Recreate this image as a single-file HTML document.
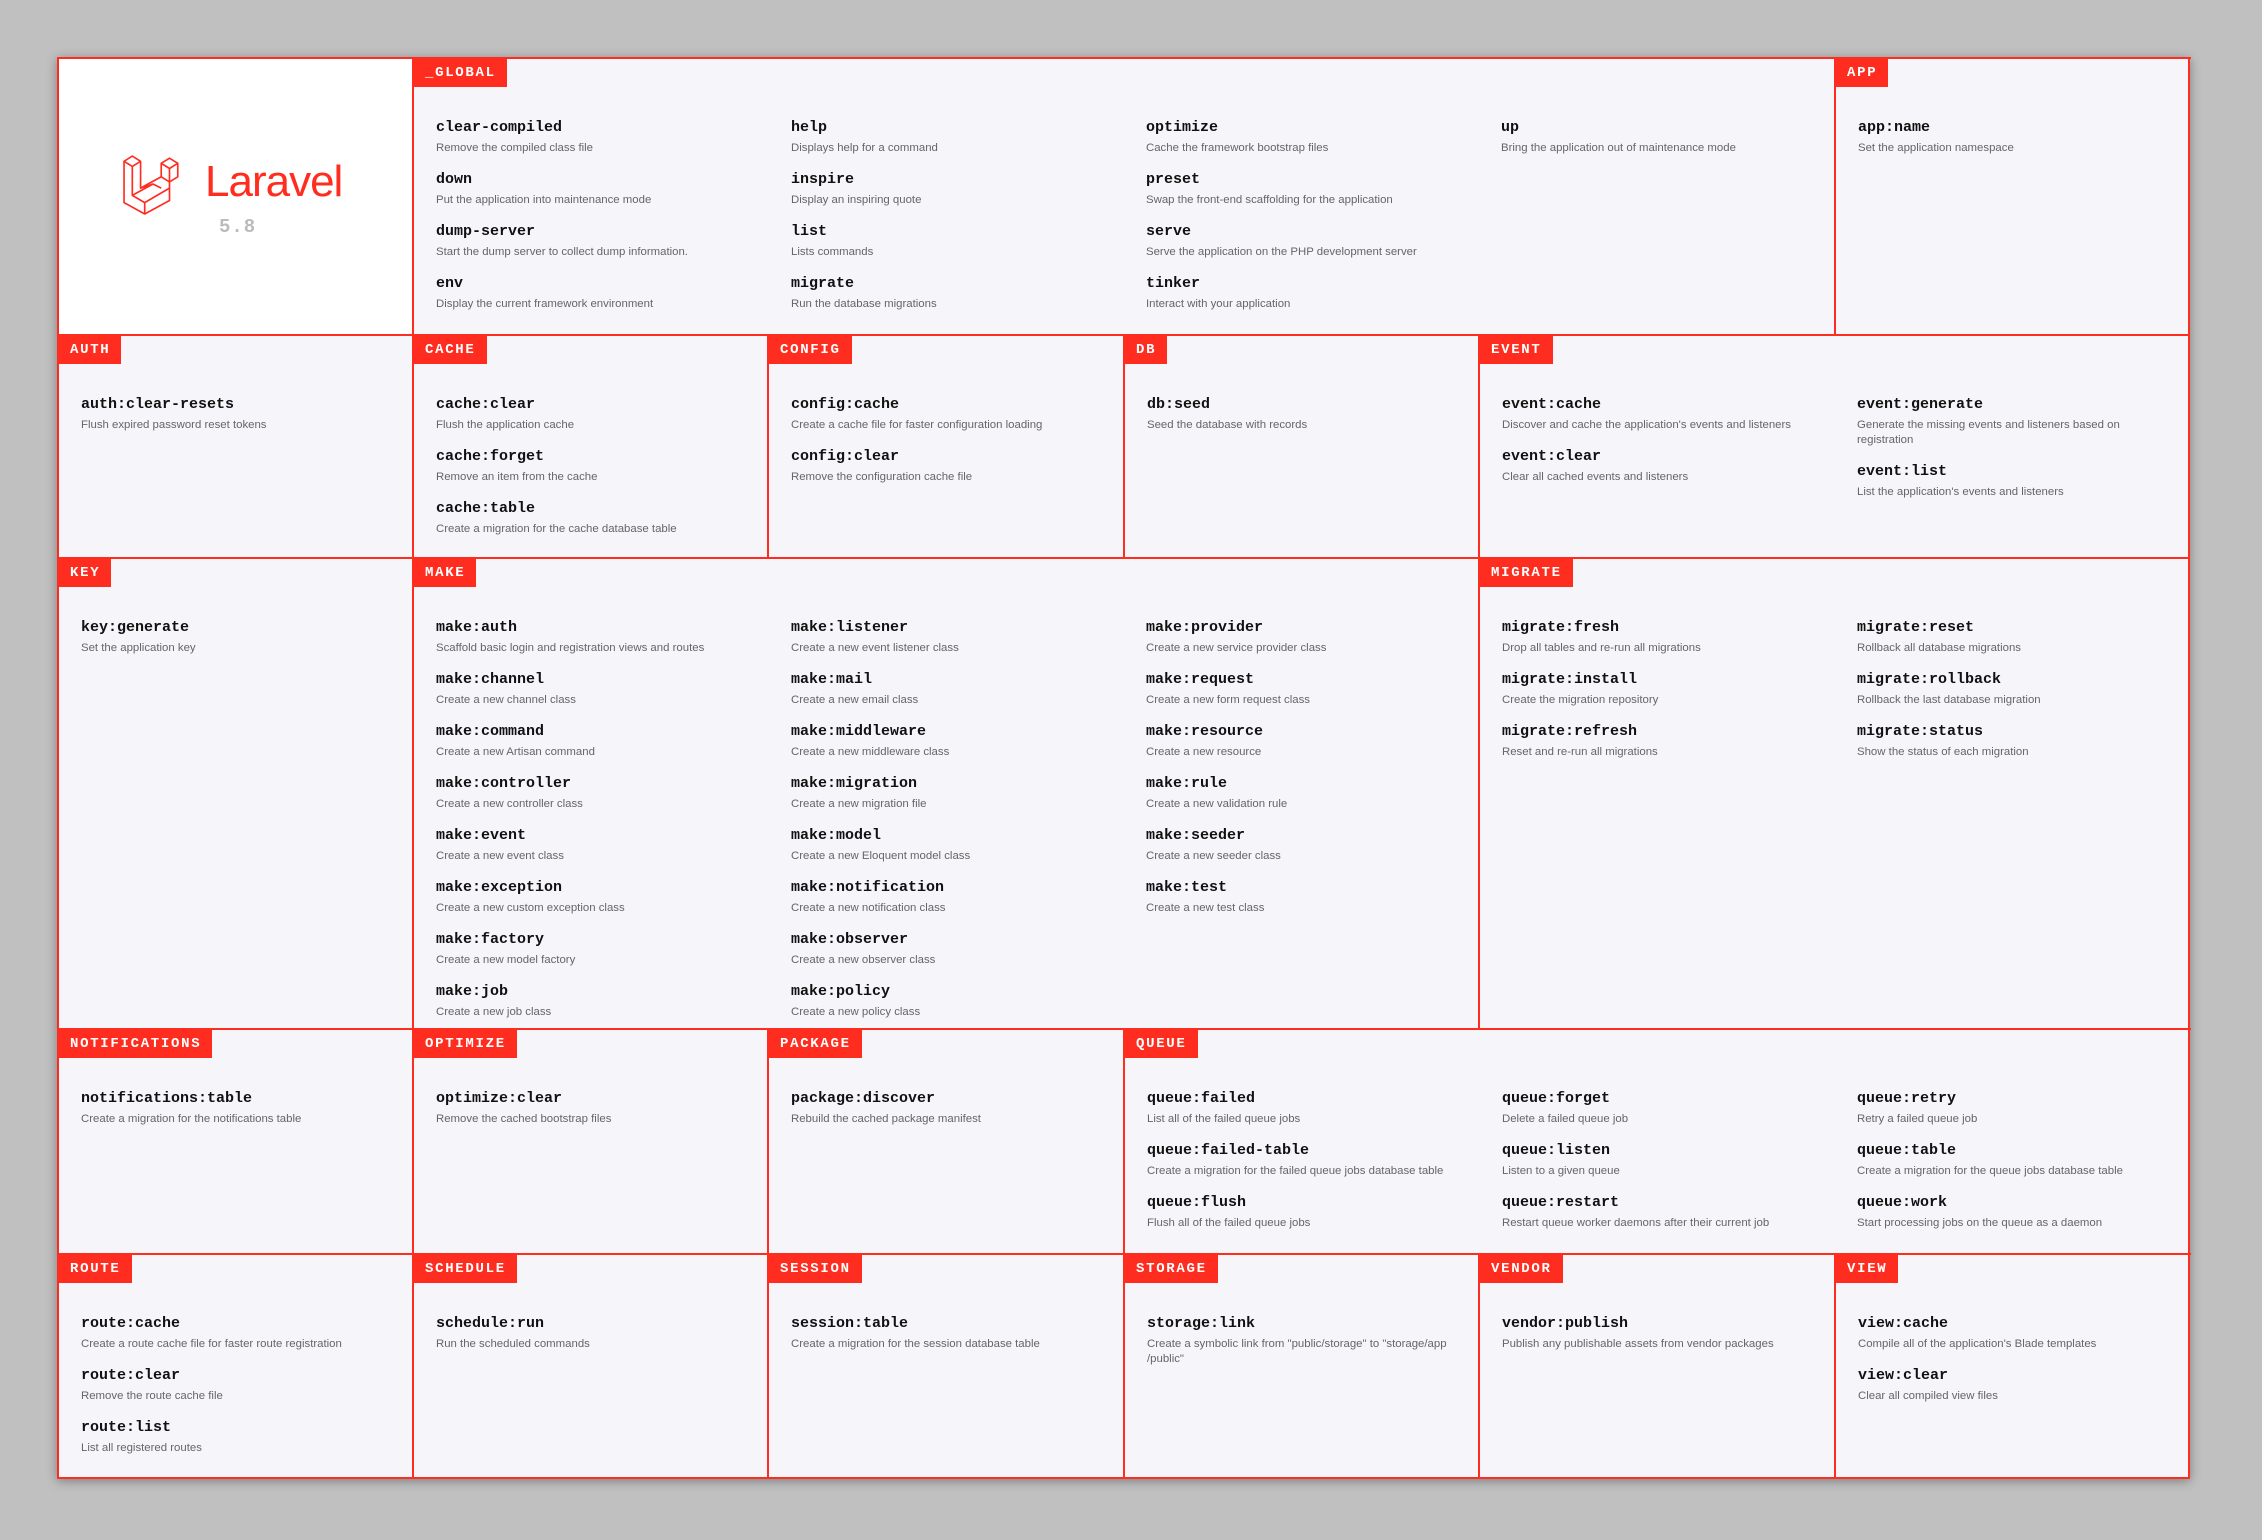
<!DOCTYPE html>
<html><head><meta charset="utf-8">
<style>
*{box-sizing:border-box;margin:0;padding:0}
html,body{width:2262px;height:1540px;background:#c0c0c0;overflow:hidden;font-family:"Liberation Sans",sans-serif}
#card{position:absolute;left:57px;top:57px;width:2133px;height:1422px;background:#f5f5fa;border:2px solid #ff2d20;box-shadow:0 2px 10px rgba(0,0,0,.35)}
.s{position:absolute;border-left:2px solid #ff2d20;border-top:2px solid #ff2d20;padding-top:59px;display:flex}
.lab{position:absolute;left:0;top:0;height:28px;line-height:28px;padding:0 11px;background:#ff2d20;color:#fff;font:bold 14px/28px "Liberation Mono",monospace;letter-spacing:1.7px}
.col{width:355px;padding-left:22px;padding-right:30px;flex:none}
.it{margin-bottom:14px}
.c{font:bold 15px/20px "Liberation Mono",monospace;color:#111}
.d{font-size:11.4px;line-height:15px;color:#666;margin-top:3px}
</style></head><body>
<div id="card">
<div style="position:absolute;left:0;top:0;width:355px;height:277px;background:#fff"></div>
<svg style="position:absolute;left:64px;top:94px" width="62" height="62" viewBox="0 0 60 60" fill="none" stroke="#ff2d20" stroke-width="1.6" stroke-linejoin="round">
<path d="M1 8 L9 3 L17 8 L17 34 L37 23 L37 10 L45 5 L53 10 L53 23 L45 28 L45 46 L21 59 L1 48 Z"/>
<path d="M1 8 L9 13 L17 8 M9 13 L9 41 L21 48 L45 34 M21 48 L21 59 M9 41 L29 30 L37 34 M17 34 L29 30 M37 10 L45 15 L53 10 M45 15 L45 28 M37 23 L45 28"/>
</svg>
<div style="position:absolute;left:146px;top:101px;font:44px/44px 'Liberation Sans',sans-serif;color:#ff2d20;letter-spacing:-1px">Laravel</div>
<div style="position:absolute;left:160px;top:159px;font:bold 19px/19px 'Liberation Mono',monospace;color:#bbb;letter-spacing:1px">5.8</div>

<div class="s" style="left:353px;top:-2px;width:1422px;height:279px"><span class="lab">_GLOBAL</span>
<div class="col"><div class="it"><div class="c">clear-compiled</div><div class="d">Remove the compiled class file</div></div><div class="it"><div class="c">down</div><div class="d">Put the application into maintenance mode</div></div><div class="it"><div class="c">dump-server</div><div class="d">Start the dump server to collect dump information.</div></div><div class="it"><div class="c">env</div><div class="d">Display the current framework environment</div></div></div>
<div class="col"><div class="it"><div class="c">help</div><div class="d">Displays help for a command</div></div><div class="it"><div class="c">inspire</div><div class="d">Display an inspiring quote</div></div><div class="it"><div class="c">list</div><div class="d">Lists commands</div></div><div class="it"><div class="c">migrate</div><div class="d">Run the database migrations</div></div></div>
<div class="col"><div class="it"><div class="c">optimize</div><div class="d">Cache the framework bootstrap files</div></div><div class="it"><div class="c">preset</div><div class="d">Swap the front-end scaffolding for the application</div></div><div class="it"><div class="c">serve</div><div class="d">Serve the application on the PHP development server</div></div><div class="it"><div class="c">tinker</div><div class="d">Interact with your application</div></div></div>
<div class="col"><div class="it"><div class="c">up</div><div class="d">Bring the application out of maintenance mode</div></div></div>
</div>
<div class="s" style="left:1775px;top:-2px;width:357px;height:279px"><span class="lab">APP</span>
<div class="col"><div class="it"><div class="c">app:name</div><div class="d">Set the application namespace</div></div></div></div>

<div class="s" style="left:-2px;top:275px;width:357px;height:225px"><span class="lab">AUTH</span>
<div class="col"><div class="it"><div class="c">auth:clear-resets</div><div class="d">Flush expired password reset tokens</div></div></div></div>
<div class="s" style="left:353px;top:275px;width:357px;height:225px"><span class="lab">CACHE</span>
<div class="col"><div class="it"><div class="c">cache:clear</div><div class="d">Flush the application cache</div></div><div class="it"><div class="c">cache:forget</div><div class="d">Remove an item from the cache</div></div><div class="it"><div class="c">cache:table</div><div class="d">Create a migration for the cache database table</div></div></div></div>
<div class="s" style="left:708px;top:275px;width:357px;height:225px"><span class="lab">CONFIG</span>
<div class="col"><div class="it"><div class="c">config:cache</div><div class="d">Create a cache file for faster configuration loading</div></div><div class="it"><div class="c">config:clear</div><div class="d">Remove the configuration cache file</div></div></div></div>
<div class="s" style="left:1064px;top:275px;width:357px;height:225px"><span class="lab">DB</span>
<div class="col"><div class="it"><div class="c">db:seed</div><div class="d">Seed the database with records</div></div></div></div>
<div class="s" style="left:1419px;top:275px;width:712px;height:225px"><span class="lab">EVENT</span>
<div class="col"><div class="it"><div class="c">event:cache</div><div class="d">Discover and cache the application's events and listeners</div></div><div class="it"><div class="c">event:clear</div><div class="d">Clear all cached events and listeners</div></div></div>
<div class="col"><div class="it"><div class="c">event:generate</div><div class="d">Generate the missing events and listeners based on registration</div></div><div class="it"><div class="c">event:list</div><div class="d">List the application's events and listeners</div></div></div></div>

<div class="s" style="left:-2px;top:498px;width:357px;height:473px"><span class="lab">KEY</span>
<div class="col"><div class="it"><div class="c">key:generate</div><div class="d">Set the application key</div></div></div></div>
<div class="s" style="left:353px;top:498px;width:1068px;height:473px"><span class="lab">MAKE</span>
<div class="col"><div class="it"><div class="c">make:auth</div><div class="d">Scaffold basic login and registration views and routes</div></div><div class="it"><div class="c">make:channel</div><div class="d">Create a new channel class</div></div><div class="it"><div class="c">make:command</div><div class="d">Create a new Artisan command</div></div><div class="it"><div class="c">make:controller</div><div class="d">Create a new controller class</div></div><div class="it"><div class="c">make:event</div><div class="d">Create a new event class</div></div><div class="it"><div class="c">make:exception</div><div class="d">Create a new custom exception class</div></div><div class="it"><div class="c">make:factory</div><div class="d">Create a new model factory</div></div><div class="it"><div class="c">make:job</div><div class="d">Create a new job class</div></div></div>
<div class="col"><div class="it"><div class="c">make:listener</div><div class="d">Create a new event listener class</div></div><div class="it"><div class="c">make:mail</div><div class="d">Create a new email class</div></div><div class="it"><div class="c">make:middleware</div><div class="d">Create a new middleware class</div></div><div class="it"><div class="c">make:migration</div><div class="d">Create a new migration file</div></div><div class="it"><div class="c">make:model</div><div class="d">Create a new Eloquent model class</div></div><div class="it"><div class="c">make:notification</div><div class="d">Create a new notification class</div></div><div class="it"><div class="c">make:observer</div><div class="d">Create a new observer class</div></div><div class="it"><div class="c">make:policy</div><div class="d">Create a new policy class</div></div></div>
<div class="col"><div class="it"><div class="c">make:provider</div><div class="d">Create a new service provider class</div></div><div class="it"><div class="c">make:request</div><div class="d">Create a new form request class</div></div><div class="it"><div class="c">make:resource</div><div class="d">Create a new resource</div></div><div class="it"><div class="c">make:rule</div><div class="d">Create a new validation rule</div></div><div class="it"><div class="c">make:seeder</div><div class="d">Create a new seeder class</div></div><div class="it"><div class="c">make:test</div><div class="d">Create a new test class</div></div></div></div>
<div class="s" style="left:1419px;top:498px;width:712px;height:473px"><span class="lab">MIGRATE</span>
<div class="col"><div class="it"><div class="c">migrate:fresh</div><div class="d">Drop all tables and re-run all migrations</div></div><div class="it"><div class="c">migrate:install</div><div class="d">Create the migration repository</div></div><div class="it"><div class="c">migrate:refresh</div><div class="d">Reset and re-run all migrations</div></div></div>
<div class="col"><div class="it"><div class="c">migrate:reset</div><div class="d">Rollback all database migrations</div></div><div class="it"><div class="c">migrate:rollback</div><div class="d">Rollback the last database migration</div></div><div class="it"><div class="c">migrate:status</div><div class="d">Show the status of each migration</div></div></div></div>

<div class="s" style="left:-2px;top:969px;width:357px;height:227px"><span class="lab">NOTIFICATIONS</span>
<div class="col"><div class="it"><div class="c">notifications:table</div><div class="d">Create a migration for the notifications table</div></div></div></div>
<div class="s" style="left:353px;top:969px;width:357px;height:227px"><span class="lab">OPTIMIZE</span>
<div class="col"><div class="it"><div class="c">optimize:clear</div><div class="d">Remove the cached bootstrap files</div></div></div></div>
<div class="s" style="left:708px;top:969px;width:357px;height:227px"><span class="lab">PACKAGE</span>
<div class="col"><div class="it"><div class="c">package:discover</div><div class="d">Rebuild the cached package manifest</div></div></div></div>
<div class="s" style="left:1064px;top:969px;width:1068px;height:227px"><span class="lab">QUEUE</span>
<div class="col"><div class="it"><div class="c">queue:failed</div><div class="d">List all of the failed queue jobs</div></div><div class="it"><div class="c">queue:failed-table</div><div class="d">Create a migration for the failed queue jobs database table</div></div><div class="it"><div class="c">queue:flush</div><div class="d">Flush all of the failed queue jobs</div></div></div>
<div class="col"><div class="it"><div class="c">queue:forget</div><div class="d">Delete a failed queue job</div></div><div class="it"><div class="c">queue:listen</div><div class="d">Listen to a given queue</div></div><div class="it"><div class="c">queue:restart</div><div class="d">Restart queue worker daemons after their current job</div></div></div>
<div class="col"><div class="it"><div class="c">queue:retry</div><div class="d">Retry a failed queue job</div></div><div class="it"><div class="c">queue:table</div><div class="d">Create a migration for the queue jobs database table</div></div><div class="it"><div class="c">queue:work</div><div class="d">Start processing jobs on the queue as a daemon</div></div></div></div>

<div class="s" style="left:-2px;top:1194px;width:357px;height:226px"><span class="lab">ROUTE</span>
<div class="col"><div class="it"><div class="c">route:cache</div><div class="d">Create a route cache file for faster route registration</div></div><div class="it"><div class="c">route:clear</div><div class="d">Remove the route cache file</div></div><div class="it"><div class="c">route:list</div><div class="d">List all registered routes</div></div></div></div>
<div class="s" style="left:353px;top:1194px;width:357px;height:226px"><span class="lab">SCHEDULE</span>
<div class="col"><div class="it"><div class="c">schedule:run</div><div class="d">Run the scheduled commands</div></div></div></div>
<div class="s" style="left:708px;top:1194px;width:357px;height:226px"><span class="lab">SESSION</span>
<div class="col"><div class="it"><div class="c">session:table</div><div class="d">Create a migration for the session database table</div></div></div></div>
<div class="s" style="left:1064px;top:1194px;width:357px;height:226px"><span class="lab">STORAGE</span>
<div class="col"><div class="it"><div class="c">storage:link</div><div class="d">Create a symbolic link from "public/storage" to "storage/app /public"</div></div></div></div>
<div class="s" style="left:1419px;top:1194px;width:357px;height:226px"><span class="lab">VENDOR</span>
<div class="col"><div class="it"><div class="c">vendor:publish</div><div class="d">Publish any publishable assets from vendor packages</div></div></div></div>
<div class="s" style="left:1775px;top:1194px;width:357px;height:226px"><span class="lab">VIEW</span>
<div class="col"><div class="it"><div class="c">view:cache</div><div class="d">Compile all of the application's Blade templates</div></div><div class="it"><div class="c">view:clear</div><div class="d">Clear all compiled view files</div></div></div></div>
</div>
</body></html>
